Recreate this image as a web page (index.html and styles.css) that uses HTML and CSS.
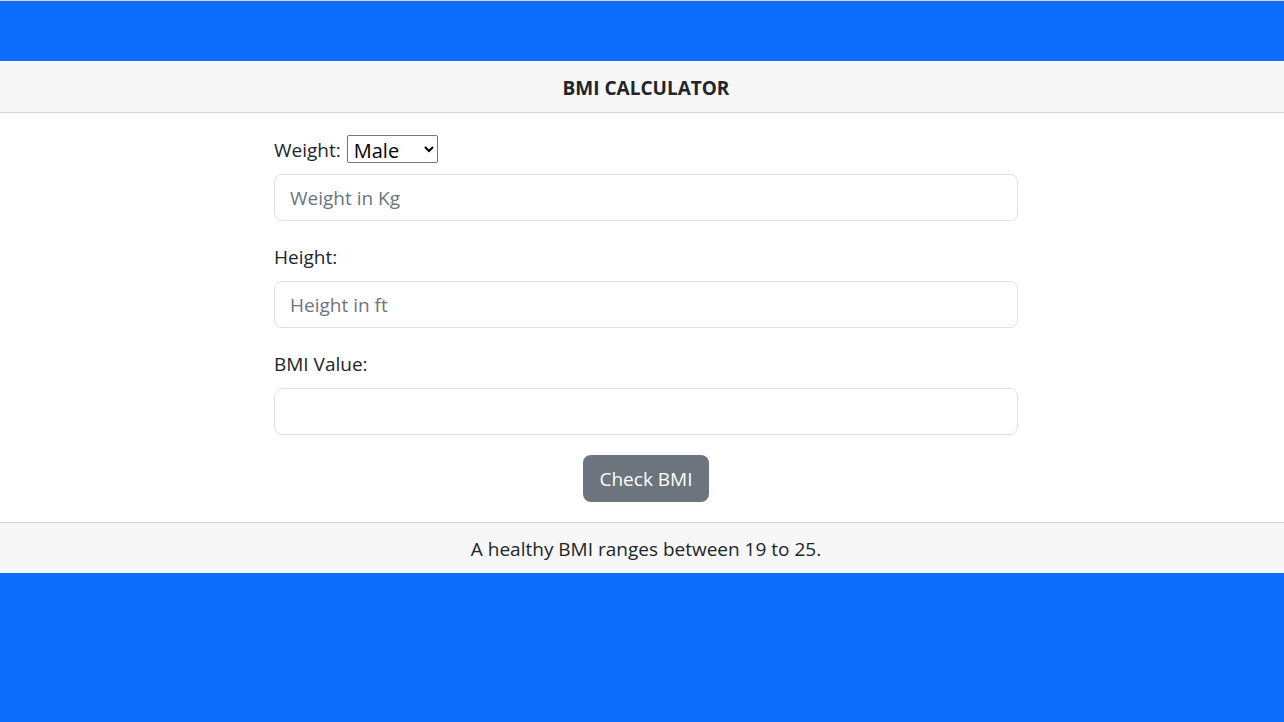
FILE: index.html
```html
<!DOCTYPE html>
<html lang="en">
<head>
<meta charset="utf-8">
<title>BMI Calculator</title>
<link rel="stylesheet" href="styles.css">
</head>
<body>
  <div class="card">
    <div class="card-header">BMI CALCULATOR</div>
    <div class="card-body">
      <form class="bmi-form">
        <div class="weight-row">
          <label for="weight">Weight:</label>
          <select class="gender" id="gender">
            <option>Male</option>
            <option>Female</option>
          </select>
        </div>
        <input class="field field-first" id="weight" type="text" placeholder="Weight in Kg">
        <label class="label" for="height">Height:</label>
        <input class="field" id="height" type="text" placeholder="Height in ft">
        <label class="label" for="bmi">BMI Value:</label>
        <input class="field" id="bmi" type="text">
        <div class="actions">
          <button type="button" class="btn">Check BMI</button>
        </div>
      </form>
    </div>
    <div class="card-footer">A healthy BMI ranges between 19 to 25.</div>
  </div>
</body>
</html>
```

FILE: styles.css
```css
html, body {
  margin: 0;
  padding: 0;
}
body {
  background: #0d6efd;
  border-top: 1px solid #d4d4d4;
  font-family: "Open Sans", "Noto Sans", sans-serif;
  font-size: 19px;
  color: #212529;
  min-height: 721px;
}
.card {
  margin-top: 60px;
  background: #fff;
}
.card-header {
  background: #f7f7f7;
  border-bottom: 1px solid #d3d3d3;
  padding: 15px 0 12px 8px;
  line-height: 24px;
  font-weight: 700;
  text-align: center;
}
.card-body {
  padding: 22px 0 20px 8px;
}
.bmi-form {
  width: 744px;
  margin: 0 auto;
  display: flex;
  flex-direction: column;
}
.weight-row {
  display: flex;
  align-items: center;
  gap: 6px;
  height: 28px;
}
.weight-row label {
  padding-top: 2px;
}
.gender {
  font-family: inherit;
  font-size: 20px;
  width: 91px;
  height: 28px;
  border: 1px solid #767676;
  border-radius: 2px;
  background: #fff;
  color: #000;
  padding: 0 2px;
}
.field {
  box-sizing: border-box;
  height: 47px;
  border: 1px solid #dee2e6;
  border-radius: 8px;
  padding: 0 15px;
  font-family: inherit;
  font-size: 19px;
  color: #212529;
  margin-top: 12px;
  outline: none;
}
.field-first {
  margin-top: 11px;
}
.field::placeholder {
  color: #6c757d;
}
.label {
  margin-top: 24px;
  line-height: 24px;
}
.actions {
  display: flex;
  justify-content: center;
  margin-top: 20px;
}
.btn {
  height: 47px;
  padding: 0 17px;
  background: #6c757d;
  color: #fff;
  border: none;
  border-radius: 8px;
  font-family: inherit;
  font-size: 19px;
}
.card-footer {
  background: #f7f7f7;
  border-top: 1px solid #d3d3d3;
  padding: 14px 0 12px 8px;
  line-height: 24px;
  text-align: center;
}
```
